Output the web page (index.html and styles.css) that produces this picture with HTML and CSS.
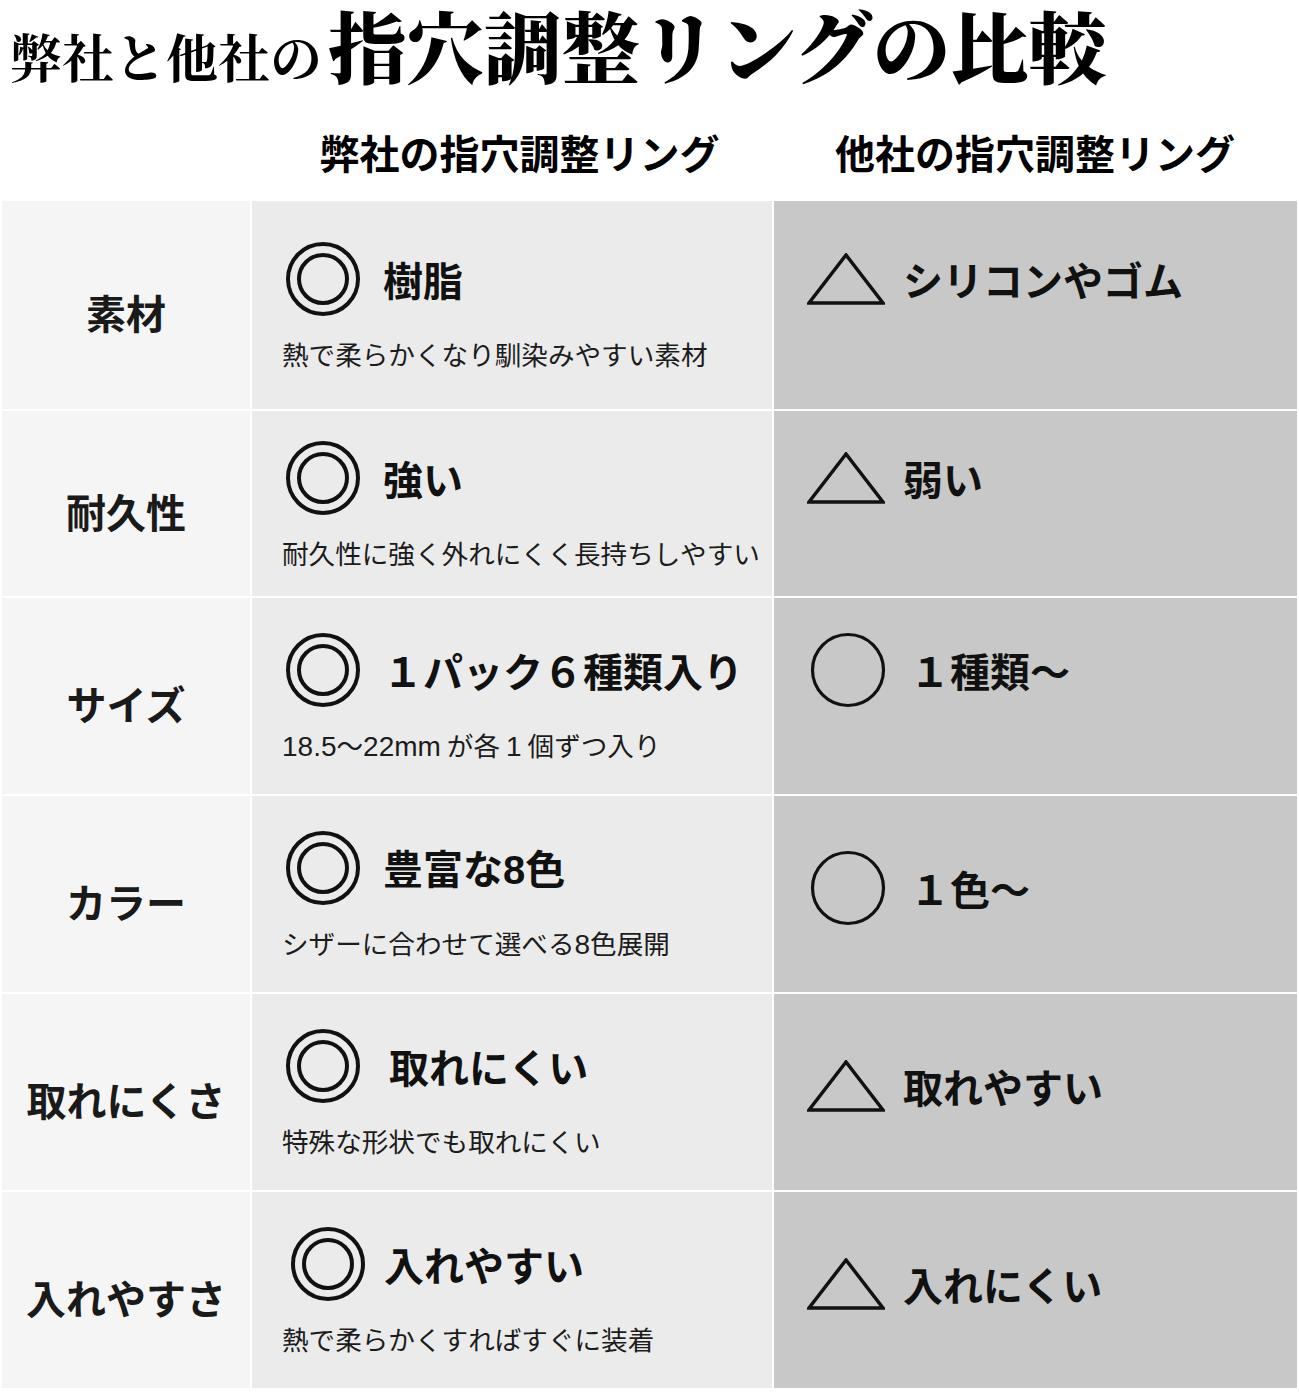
FILE: index.html
```html
<!DOCTYPE html>
<html lang="ja">
<head>
<meta charset="utf-8">
<title>弊社と他社の指穴調整リングの比較</title>
<link rel="stylesheet" href="styles.css">
</head>
<body>
<header class="title-wrap">
  <h1 class="title"><span class="title-small">弊社と他社の</span><span class="title-big">指穴調整リングの比較</span></h1>
</header>

<div class="heads">
  <div class="head-blank"></div>
  <div class="head">弊社の指穴調整リング</div>
  <div class="head">他社の指穴調整リング</div>
</div>

<div class="table">
  <!-- row 1 -->
  <div class="label">素材</div>
  <div class="ours">
    <div class="main"><svg class="dbl" viewBox="0 0 76 76"><circle cx="38" cy="38" r="35" /><circle cx="38" cy="38" r="24" /></svg><span>樹脂</span></div>
    <div class="sub">熱で柔らかくなり馴染みやすい素材</div>
  </div>
  <div class="theirs">
    <div class="main"><svg class="tri" viewBox="0 0 78 52"><polygon points="39,2 2,50 76,50" /></svg><span class="t-tri">シリコンやゴム</span></div>
    <div class="sub sub-empty"></div>
  </div>

  <!-- row 2 -->
  <div class="label">耐久性</div>
  <div class="ours">
    <div class="main"><svg class="dbl" viewBox="0 0 76 76"><circle cx="38" cy="38" r="35" /><circle cx="38" cy="38" r="24" /></svg><span>強い</span></div>
    <div class="sub">耐久性に強く外れにくく長持ちしやすい</div>
  </div>
  <div class="theirs">
    <div class="main"><svg class="tri" viewBox="0 0 78 52"><polygon points="39,2 2,50 76,50" /></svg><span class="t-tri">弱い</span></div>
    <div class="sub sub-empty"></div>
  </div>

  <!-- row 3 -->
  <div class="label">サイズ</div>
  <div class="ours">
    <div class="main"><svg class="dbl" viewBox="0 0 76 76"><circle cx="38" cy="38" r="35" /><circle cx="38" cy="38" r="24" /></svg><span>１パック６種類入り</span></div>
    <div class="sub"><span class="latin">18.5</span>～<span class="latin">22mm</span> が各 <span class="latin">1</span> 個ずつ入り</div>
  </div>
  <div class="theirs">
    <div class="main"><svg class="sgl" viewBox="0 0 76 76"><circle cx="38" cy="38" r="35.5" /></svg><span class="t-sgl">１種類～</span></div>
    <div class="sub sub-empty"></div>
  </div>

  <!-- row 4 -->
  <div class="label">カラー</div>
  <div class="ours">
    <div class="main"><svg class="dbl" viewBox="0 0 76 76"><circle cx="38" cy="38" r="35" /><circle cx="38" cy="38" r="24" /></svg><span>豊富な<span class="latin">8</span>色</span></div>
    <div class="sub">シザーに合わせて選べる<span class="latin">8</span>色展開</div>
  </div>
  <div class="theirs theirs-mid">
    <div class="main"><svg class="sgl" viewBox="0 0 76 76"><circle cx="38" cy="38" r="35.5" /></svg><span class="t-sgl">１色～</span></div>
  </div>

  <!-- row 5 -->
  <div class="label">取れにくさ</div>
  <div class="ours">
    <div class="main"><svg class="dbl" viewBox="0 0 76 76"><circle cx="38" cy="38" r="35" /><circle cx="38" cy="38" r="24" /></svg><span class="t-wide">取れにくい</span></div>
    <div class="sub">特殊な形状でも取れにくい</div>
  </div>
  <div class="theirs theirs-mid">
    <div class="main"><svg class="tri" viewBox="0 0 78 52"><polygon points="39,2 2,50 76,50" /></svg><span class="t-tri">取れやすい</span></div>
  </div>

  <!-- row 6 -->
  <div class="label">入れやすさ</div>
  <div class="ours">
    <div class="main"><svg class="dbl dbl-shift" viewBox="0 0 76 76"><circle cx="38" cy="38" r="35" /><circle cx="38" cy="38" r="24" /></svg><span class="t-tight">入れやすい</span></div>
    <div class="sub">熱で柔らかくすればすぐに装着</div>
  </div>
  <div class="theirs theirs-mid">
    <div class="main"><svg class="tri" viewBox="0 0 78 52"><polygon points="39,2 2,50 76,50" /></svg><span class="t-tri">入れにくい</span></div>
  </div>
</div>
</body>
</html>
```
FILE: styles.css
```css
* { box-sizing: border-box; }

html, body {
  margin: 0;
  padding: 0;
  background: #ffffff;
}

body {
  width: 1299px;
  font-family: "Noto Sans CJK JP", "Noto Sans", sans-serif;
  color: #111111;
}

.title-wrap {
  height: 100px;
  display: flex;
  align-items: flex-start;
}

.title {
  margin: -8px 0 0 0;
  padding-left: 10px;
  display: flex;
  align-items: baseline;
  font-family: "Noto Serif CJK JP", "Noto Serif JP", "IPAMincho", "Liberation Serif", "Noto Sans CJK JP", serif;
  color: #000000;
  line-height: 1.35;
  white-space: nowrap;
}

.title-small {
  font-size: 52px;
  font-weight: 700;
}

.title-big {
  font-size: 78px;
  font-weight: 900;
  margin-left: 6px;
}

.heads {
  display: grid;
  grid-template-columns: 250px 521px 1fr;
  height: 100px;
  align-items: center;
  margin-left: 2px;
  width: 1295px;
}

.head {
  text-align: center;
  font-size: 40px;
  font-weight: 700;
  line-height: 1;
  padding-top: 4px;
  color: #000000;
}

.head:nth-child(2) { padding-left: 14px; }

.table {
  display: grid;
  grid-template-columns: 248px 520px 1fr;
  grid-template-rows: 208px 185px 196px 196px 196px 196px;
  gap: 2px 2px;
  width: 1295px;
  margin-left: 2px;
  margin-top: 1px;
  background: #ffffff;
}

.label {
  background: #f5f5f5;
  display: flex;
  align-items: center;
  justify-content: center;
  padding-top: 14px;
  font-size: 40px;
  font-weight: 700;
  color: #1a1a1a;
  line-height: 1;
}

.ours, .theirs {
  display: flex;
  flex-direction: column;
  justify-content: center;
}

.ours {
  background: #ebebeb;
  padding-left: 30px;
}

.theirs {
  background: #c8c8c8;
  padding-left: 33px;
}

.theirs-mid {
  padding-bottom: 12px;
}

.main {
  display: flex;
  align-items: center;
  height: 76px;
  font-size: 40px;
  font-weight: 700;
  line-height: 1;
  color: #111111;
}

.sub {
  margin-top: 22px;
  font-size: 26.6px;
  font-weight: 400;
  line-height: 30px;
  height: 30px;
  color: #1c1c1c;
  white-space: nowrap;
}

.latin {
  font-family: "Liberation Sans", "Noto Sans CJK JP", sans-serif;
}

.sub .latin {
  font-size: 28px;
}

.dbl {
  width: 76px;
  height: 76px;
  margin-left: 3px;
  margin-right: 22px;
  flex: none;
}

.dbl-shift {
  margin-left: 8px;
  margin-right: 18px;
}

.dbl circle, .sgl circle {
  fill: none;
  stroke: #111111;
  stroke-width: 4;
}

.sgl circle { stroke-width: 3.2; }

.sgl {
  width: 76px;
  height: 76px;
  margin-left: 3px;
  margin-right: 24px;
  flex: none;
}

.tri {
  width: 78px;
  height: 52px;
  margin-right: 18px;
  flex: none;
}

.tri polygon {
  fill: none;
  stroke: #111111;
  stroke-width: 3.5;
  stroke-linejoin: miter;
}

.t-wide { margin-left: 6px; }
```
